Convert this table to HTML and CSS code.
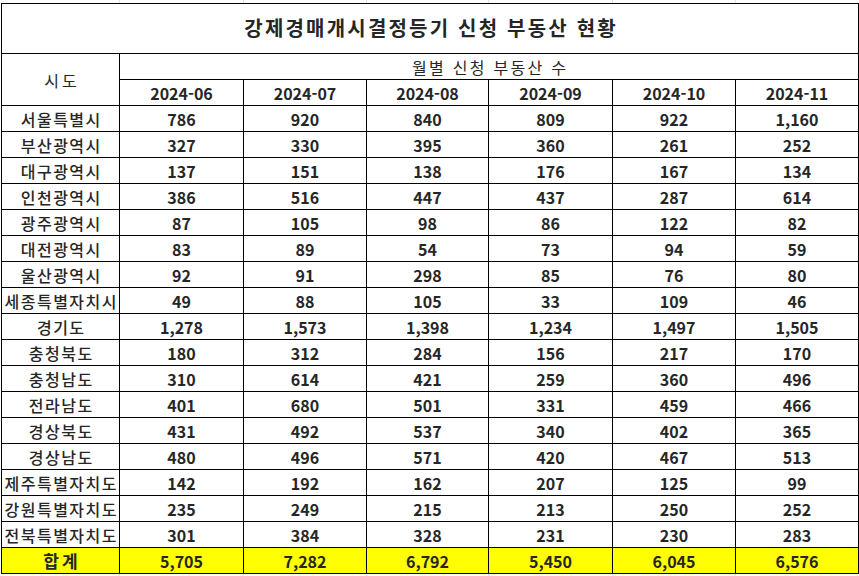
FILE: index.html
```html
<!DOCTYPE html>
<html lang="ko">
<head>
<meta charset="utf-8">
<link rel="stylesheet" href="styles.css">
</head>
<body>
<div class="sheet">
  <div class="gridstrip top"></div>
  <table class="report">
    <colgroup>
      <col class="c-region">
      <col class="c-m1">
      <col class="c-m2">
      <col class="c-m3">
      <col class="c-m4">
      <col class="c-m5">
      <col class="c-m6">
    </colgroup>
    <thead>
      <tr class="r-title"><th colspan="7" class="title">강제경매개시결정등기 신청 부동산 현황</th></tr>
      <tr class="r-row"><th rowspan="2" class="region-head">시도</th><th colspan="6" class="sub">월별 신청 부동산 수</th></tr>
      <tr class="r-row month"><th>2024-06</th><th>2024-07</th><th>2024-08</th><th>2024-09</th><th>2024-10</th><th>2024-11</th></tr>
    </thead>
    <tbody>
      <tr class="r-row"><th>서울특별시</th><td>786</td><td>920</td><td>840</td><td>809</td><td>922</td><td>1,160</td></tr>
      <tr class="r-row"><th>부산광역시</th><td>327</td><td>330</td><td>395</td><td>360</td><td>261</td><td>252</td></tr>
      <tr class="r-row"><th>대구광역시</th><td>137</td><td>151</td><td>138</td><td>176</td><td>167</td><td>134</td></tr>
      <tr class="r-row"><th>인천광역시</th><td>386</td><td>516</td><td>447</td><td>437</td><td>287</td><td>614</td></tr>
      <tr class="r-row"><th>광주광역시</th><td>87</td><td>105</td><td>98</td><td>86</td><td>122</td><td>82</td></tr>
      <tr class="r-row"><th>대전광역시</th><td>83</td><td>89</td><td>54</td><td>73</td><td>94</td><td>59</td></tr>
      <tr class="r-row"><th>울산광역시</th><td>92</td><td>91</td><td>298</td><td>85</td><td>76</td><td>80</td></tr>
      <tr class="r-row"><th>세종특별자치시</th><td>49</td><td>88</td><td>105</td><td>33</td><td>109</td><td>46</td></tr>
      <tr class="r-row"><th>경기도</th><td>1,278</td><td>1,573</td><td>1,398</td><td>1,234</td><td>1,497</td><td>1,505</td></tr>
      <tr class="r-row"><th>충청북도</th><td>180</td><td>312</td><td>284</td><td>156</td><td>217</td><td>170</td></tr>
      <tr class="r-row"><th>충청남도</th><td>310</td><td>614</td><td>421</td><td>259</td><td>360</td><td>496</td></tr>
      <tr class="r-row"><th>전라남도</th><td>401</td><td>680</td><td>501</td><td>331</td><td>459</td><td>466</td></tr>
      <tr class="r-row"><th>경상북도</th><td>431</td><td>492</td><td>537</td><td>340</td><td>402</td><td>365</td></tr>
      <tr class="r-row"><th>경상남도</th><td>480</td><td>496</td><td>571</td><td>420</td><td>467</td><td>513</td></tr>
      <tr class="r-row"><th>제주특별자치도</th><td>142</td><td>192</td><td>162</td><td>207</td><td>125</td><td>99</td></tr>
      <tr class="r-row"><th>강원특별자치도</th><td>235</td><td>249</td><td>215</td><td>213</td><td>250</td><td>252</td></tr>
      <tr class="r-row"><th>전북특별자치도</th><td>301</td><td>384</td><td>328</td><td>231</td><td>230</td><td>283</td></tr>
    </tbody>
    <tfoot>
      <tr class="r-row total"><th>합계</th><td>5,705</td><td>7,282</td><td>6,792</td><td>5,450</td><td>6,045</td><td>6,576</td></tr>
    </tfoot>
  </table>
  <div class="gridstrip bottom"></div>
</div>
</body>
</html>
```

FILE: styles.css
```css
html, body {
  margin: 0;
  padding: 0;
  background: #ffffff;
}

body {
  font-family: "Noto Sans CJK KR", "Noto Sans", sans-serif;
  color: #262626;
}

.sheet {
  width: 859px;
  height: 576px;
  overflow: hidden;
  padding-left: 1px;
  box-sizing: border-box;
}

.gridstrip {
  width: 857px;
  background-image:
    linear-gradient(to right, transparent 118px, #e3e3e3 118px, #e3e3e3 119px, transparent 119px),
    linear-gradient(to right, transparent 242px, #e3e3e3 242px, #e3e3e3 243px, transparent 243px),
    linear-gradient(to right, transparent 365px, #e3e3e3 365px, #e3e3e3 366px, transparent 366px),
    linear-gradient(to right, transparent 487px, #e3e3e3 487px, #e3e3e3 488px, transparent 488px),
    linear-gradient(to right, transparent 611px, #e3e3e3 611px, #e3e3e3 612px, transparent 612px),
    linear-gradient(to right, transparent 734px, #e3e3e3 734px, #e3e3e3 735px, transparent 735px);
}

.gridstrip.top {
  height: 3px;
}

.gridstrip.bottom {
  height: 3px;
}

.report {
  border-collapse: collapse;
  table-layout: fixed;
  width: 857px;
}

.c-region { width: 118px; }
.c-m1 { width: 124px; }
.c-m2 { width: 123px; }
.c-m3 { width: 122px; }
.c-m4 { width: 124px; }
.c-m5 { width: 123px; }
.c-m6 { width: 123px; }

.report th,
.report td {
  border: 1px solid #000;
  padding: 0;
  text-align: center;
  vertical-align: middle;
  white-space: nowrap;
  overflow: hidden;
  font-size: 16px;
  line-height: 20px;
}

.report td {
  font-weight: 700;
}

.report tbody th {
  font-weight: 500;
  letter-spacing: 1.5px;
  text-indent: 1.5px;
}

.r-title {
  height: 50px;
}

.report .title {
  font-size: 20px;
  line-height: 26px;
  font-weight: 700;
  letter-spacing: 2.2px;
  text-indent: 2.2px;
  padding-bottom: 2px;
}

.r-row {
  height: 26px;
}

.report .region-head {
  font-weight: 400;
  letter-spacing: 3px;
  text-indent: 3px;
}

.report .sub {
  font-weight: 400;
  letter-spacing: 2.3px;
  text-indent: 2.3px;
}

.report .month th {
  font-weight: 700;
}

.report .total th,
.report .total td {
  background: #ffff00;
  font-weight: 700;
}

.report .total th {
  font-size: 17px;
  letter-spacing: 3px;
  text-indent: 3px;
}
```
